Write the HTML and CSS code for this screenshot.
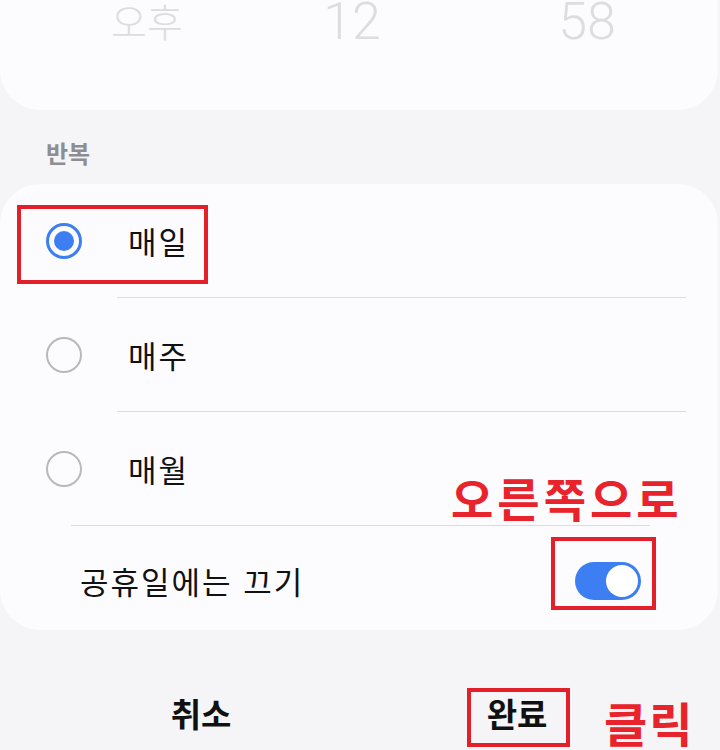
FILE: index.html
```html
<!DOCTYPE html>
<html lang="ko">
<head>
<meta charset="utf-8">
<title>반복 설정</title>
<link rel="stylesheet" href="styles.css">
</head>
<body>
<div class="page">
  <section class="picker">
    <div class="wheel">
      <span class="cell ampm">오후</span>
      <span class="cell num">12</span>
      <span class="cell num">58</span>
    </div>
  </section>

  <h2 class="label">반복</h2>

  <section class="card">
    <div class="row">
      <span class="radio on"></span>
      <span class="text">매일</span>
    </div>
    <div class="sep"></div>
    <div class="row">
      <span class="radio"></span>
      <span class="text">매주</span>
    </div>
    <div class="sep"></div>
    <div class="row">
      <span class="radio"></span>
      <span class="text">매월</span>
    </div>
    <div class="sep sep-wide"></div>
    <div class="switch-row">
      <span class="text">공휴일에는 끄기</span>
      <span class="toggle"><span class="thumb"></span></span>
    </div>
  </section>

  <div class="actions">
    <span class="btn">취소</span>
    <span class="btn">완료</span>
  </div>

  <span class="mark mark-daily"></span>
  <span class="mark mark-toggle"></span>
  <span class="mark mark-done"></span>
  <span class="note note-right">오른쪽으로</span>
  <span class="note note-click">클릭</span>
</div>
</body>
</html>
```

FILE: styles.css
```css
* { box-sizing: border-box; }

html, body {
  margin: 0;
  padding: 0;
  background: #f5f5f7;
}

body {
  font-family: "Noto Sans CJK KR", "Noto Sans", sans-serif;
  color: #111111;
}

.page {
  position: relative;
  width: 720px;
  height: 750px;
  overflow: hidden;
}

/* time picker */
.picker {
  width: 718px;
  height: 110px;
  background: #fcfcfe;
  border-radius: 0 0 40px 40px;
  overflow: hidden;
}

.wheel {
  display: grid;
  grid-template-columns: 294px 116px 354px;
  height: 50px;
  align-items: start;
  justify-items: center;
}

.cell {
  color: #dddde0;
}

.ampm {
  font-size: 39px;
  font-weight: 300;
  line-height: 1;
  padding-top: 1px;
}

.num {
  font-family: Roboto, "Liberation Sans", sans-serif;
  font-size: 52px;
  font-weight: 300;
  line-height: 1;
  margin-top: -4px;
}

/* section label */
.label {
  margin: 0;
  height: 74px;
  padding: 10px 0 0 46px;
  display: flex;
  align-items: center;
  font-size: 24px;
  font-weight: 700;
  color: #8d8d92;
}

/* repeat card */
.card {
  width: 718px;
  height: 446px;
  background: #fcfcfe;
  border-radius: 40px;
}

.row {
  height: 113px;
  display: flex;
  align-items: center;
  padding-left: 46px;
  gap: 46px;
}

.text {
  font-size: 31px;
  line-height: 1;
  letter-spacing: 2px;
  color: #111111;
}

.radio {
  width: 36px;
  height: 36px;
  border-radius: 50%;
  border: 2.5px solid #b9b9bc;
  display: flex;
  align-items: center;
  justify-content: center;
}

.radio.on {
  border: 3.5px solid #3d7ef2;
}

.radio.on::after {
  content: "";
  width: 20px;
  height: 20px;
  border-radius: 50%;
  background: #3d7ef2;
}

.sep {
  height: 1px;
  background: #dcdcdf;
  margin: 0 32px 0 117px;
}

.sep-wide {
  margin: 0 68px 0 71px;
}

.switch-row {
  height: 105px;
  display: flex;
  align-items: center;
  justify-content: space-between;
  padding: 4px 77px 0 80px;
}

.toggle {
  width: 66px;
  height: 38px;
  border-radius: 19px;
  background: #3d7ef2;
  display: flex;
  align-items: center;
  justify-content: flex-end;
  padding: 0 3px;
}

.thumb {
  width: 32px;
  height: 32px;
  border-radius: 50%;
  background: #ffffff;
}

/* bottom actions */
.actions {
  display: grid;
  grid-template-columns: 316px 316px;
  padding-left: 43px;
  height: 120px;
}

.btn {
  text-align: center;
  font-size: 33px;
  font-weight: 700;
  line-height: 1;
  padding-top: 67px;
}

/* annotations (overlays) */
.mark {
  position: absolute;
  border: 4px solid #e3202a;
}

.mark-daily {
  left: 17px;
  top: 205px;
  width: 191px;
  height: 79px;
}

.mark-toggle {
  left: 551px;
  top: 537px;
  width: 105px;
  height: 73px;
}

.mark-done {
  left: 467px;
  top: 688px;
  width: 103px;
  height: 59px;
}

.note {
  position: absolute;
  color: #e8232b;
  font-weight: 700;
  line-height: 1;
  white-space: nowrap;
}

.note-right {
  left: 451px;
  top: 474px;
  font-size: 46px;
  letter-spacing: 4px;
}

.note-click {
  left: 604px;
  top: 698px;
  font-size: 47px;
  letter-spacing: 2px;
}
```
